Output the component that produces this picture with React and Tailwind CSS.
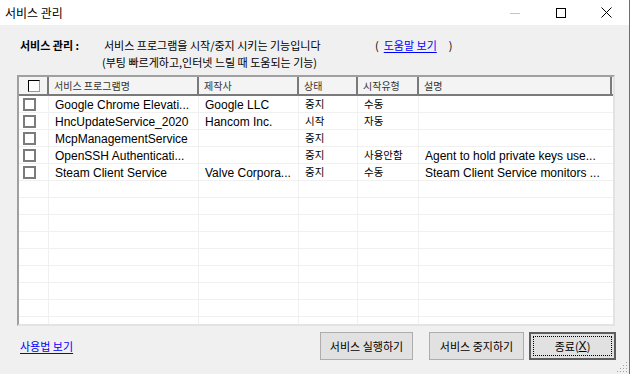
import React from 'react';

const KR = { fontFamily: '"Noto Sans CJK KR", sans-serif' };

const services = [
  { name: 'Google Chrome Elevati...', maker: 'Google LLC', state: '중지', start: '수동', desc: '' },
  { name: 'HncUpdateService_2020', maker: 'Hancom Inc.', state: '시작', start: '자동', desc: '' },
  { name: 'McpManagementService', maker: '', state: '중지', start: '', desc: '' },
  { name: 'OpenSSH Authenticati...', maker: '', state: '중지', start: '사용안함', desc: 'Agent to hold private keys use...' },
  { name: 'Steam Client Service', maker: 'Valve Corpora...', state: '중지', start: '수동', desc: 'Steam Client Service monitors ...' },
];

const cols = [
  { label: '서비스 프로그램명', w: 'w-[150px]' },
  { label: '제작사', w: 'w-[100px]' },
  { label: '상태', w: 'w-[59px]' },
  { label: '시작유형', w: 'w-[61px]' },
  { label: '설명', w: 'w-[193px]' },
];

const TitleBar = () => (
  <div className="h-[25px] bg-white flex items-center">
    <span className="pl-[5px] text-[12px] text-black leading-none" style={KR}>서비스 관리</span>
    <div className="ml-auto flex h-full">
      <div className="w-[46px] flex items-center justify-center">
        <svg width="10" height="10" viewBox="0 0 10 10"><line x1="0" y1="5.5" x2="10" y2="5.5" stroke="#c4c4c4" strokeWidth="1" /></svg>
      </div>
      <div className="w-[46px] flex items-center justify-center">
        <svg width="10" height="10" viewBox="0 0 10 10"><rect x="0.5" y="0.5" width="9" height="9" fill="none" stroke="#000" strokeWidth="1" /></svg>
      </div>
      <div className="w-[45px] flex items-center justify-center">
        <svg width="11" height="11" viewBox="0 0 11 11"><path d="M0.5 0.5 L10.5 10.5 M10.5 0.5 L0.5 10.5" stroke="#000" strokeWidth="1" /></svg>
      </div>
    </div>
  </div>
);

const RowCheck = () => <div className="ml-[4px] w-[13px] h-[13px] bg-white border-2 border-[#7b7b7b]" />;

const Cell = ({ w, children, kr, last }) => (
  <div className={`${w} h-full flex items-center pl-[6px] overflow-hidden whitespace-nowrap ${last ? '' : 'border-r border-[#f0f0f0]'}`}>
    {kr ? (
      <span className="text-[10.5px] leading-none" style={KR}>{children}</span>
    ) : (
      <span className="text-[12px] leading-none pt-[1px]" style={{ fontFamily: '"Liberation Sans", sans-serif' }}>{children}</span>
    )}
  </div>
);

const ServiceList = () => {
  const empty = Array.from({ length: 9 });
  return (
    <div className="ml-[17px] w-[598px] h-[251px] border-2 border-t-[#a0a0a0] border-l-[#a0a0a0] border-b-[#e3e3e3] border-r-[#e3e3e3] bg-white overflow-hidden">
      {/* header */}
      <div className="h-[19px] flex bg-[#f4f4f4] border-b-2 border-[#7a7a7a]">
        <div className="w-[30px] h-full flex items-center border-r-2 border-[#7a7a7a]">
          <div className="ml-[9px] w-[12px] h-[12px] bg-white border border-t-black border-l-black border-b-[#9a9a9a] border-r-[#9a9a9a]" />
        </div>
        {cols.map((c) => (
          <div key={c.label} className={`${c.w} h-full flex items-center pl-[5px] border-r-2 border-[#7a7a7a]`}>
            <span className="text-[10px] leading-none text-[#333]" style={KR}>{c.label}</span>
          </div>
        ))}
      </div>
      {/* rows */}
      {services.map((s) => (
        <div key={s.name} className="h-[17px] flex border-b border-[#f0f0f0]">
          <div className="w-[30px] h-full flex items-center border-r border-[#f0f0f0]">
            <RowCheck />
          </div>
          <Cell w="w-[150px]">{s.name}</Cell>
          <Cell w="w-[100px]">{s.maker}</Cell>
          <Cell w="w-[59px]" kr>{s.state}</Cell>
          <Cell w="w-[61px]" kr>{s.start}</Cell>
          <Cell w="w-[193px]" last>{s.desc}</Cell>
        </div>
      ))}
      {empty.map((_, i) => (
        <div key={i} className="h-[17px] flex border-b border-[#f0f0f0]">
          <div className="w-[30px] h-full border-r border-[#f0f0f0]" />
          <div className="w-[150px] h-full border-r border-[#f0f0f0]" />
          <div className="w-[100px] h-full border-r border-[#f0f0f0]" />
          <div className="w-[59px] h-full border-r border-[#f0f0f0]" />
          <div className="w-[61px] h-full border-r border-[#f0f0f0]" />
          <div className="w-[193px] h-full" />
        </div>
      ))}
    </div>
  );
};

const Btn = ({ children, className }) => (
  <button className={`h-[28px] bg-[#e1e1e1] border border-[#adadad] text-[11px] text-black leading-none ${className}`} style={KR}>
    {children}
  </button>
);

export default function App() {
  return (
    <div className="relative w-[630px] h-[374px] overflow-hidden bg-[#f0f0f0] border-r border-[#6f6f6f] flex flex-col">
      <TitleBar />
      <div className="flex-1 flex flex-col">
        {/* intro */}
        <div className="pt-[12px] pl-[20px] text-[11px] leading-[17px] text-black" style={KR}>
          <div className="flex">
            <span className="w-[84px] font-bold">서비스 관리 :</span>
            <span className="w-[271px]">서비스 프로그램을 시작/중지 시키는 기능입니다</span>
            <span>(</span>
            <span className="ml-[5px] text-[#0000ff] underline underline-offset-2">도움말 보기</span>
            <span className="ml-[12px]">)</span>
          </div>
          <div className="flex">
            <span className="w-[82px]" />
            <span>(부팅 빠르게하고,인터넷 느릴 때 도움되는 기능)</span>
          </div>
        </div>

        <div className="mt-[4px]">
          <ServiceList />
        </div>

        {/* bottom bar */}
        <div className="flex items-start pt-[6px] pr-[13px]">
          <span className="ml-[20px] mt-[9px] text-[11px] leading-none text-[#0000ff] underline underline-offset-2" style={KR}>사용법 보기</span>
          <Btn className="ml-auto w-[93px]">서비스 실행하기</Btn>
          <Btn className="ml-[16px] w-[95px]">서비스 중지하기</Btn>
          <button className="ml-[5px] w-[87px] h-[28px] bg-[#e1e1e1] border-2 border-[#5e5e5e] p-[2px]" style={KR}>
            <div className="w-full h-full border border-dotted border-black flex items-center justify-center text-[11px] leading-none text-black">
              종료(<span className="underline" style={{ fontFamily: '"Liberation Sans", sans-serif', fontSize: '12px' }}>X</span>)
            </div>
          </button>
        </div>
      </div>
      {/* resize grip */}
      <svg className="absolute right-[1px] bottom-[1px]" width="11" height="11" viewBox="0 0 11 11">
        {[[9, 1], [9, 4], [6, 4], [9, 7], [6, 7], [3, 7], [9, 10], [6, 10], [3, 10], [0, 10]].map(([x, y], i) => (
          <rect key={i} x={x} y={y - 1} width="1" height="1" fill="#a0a0a0" />
        ))}
      </svg>
    </div>
  );
}
